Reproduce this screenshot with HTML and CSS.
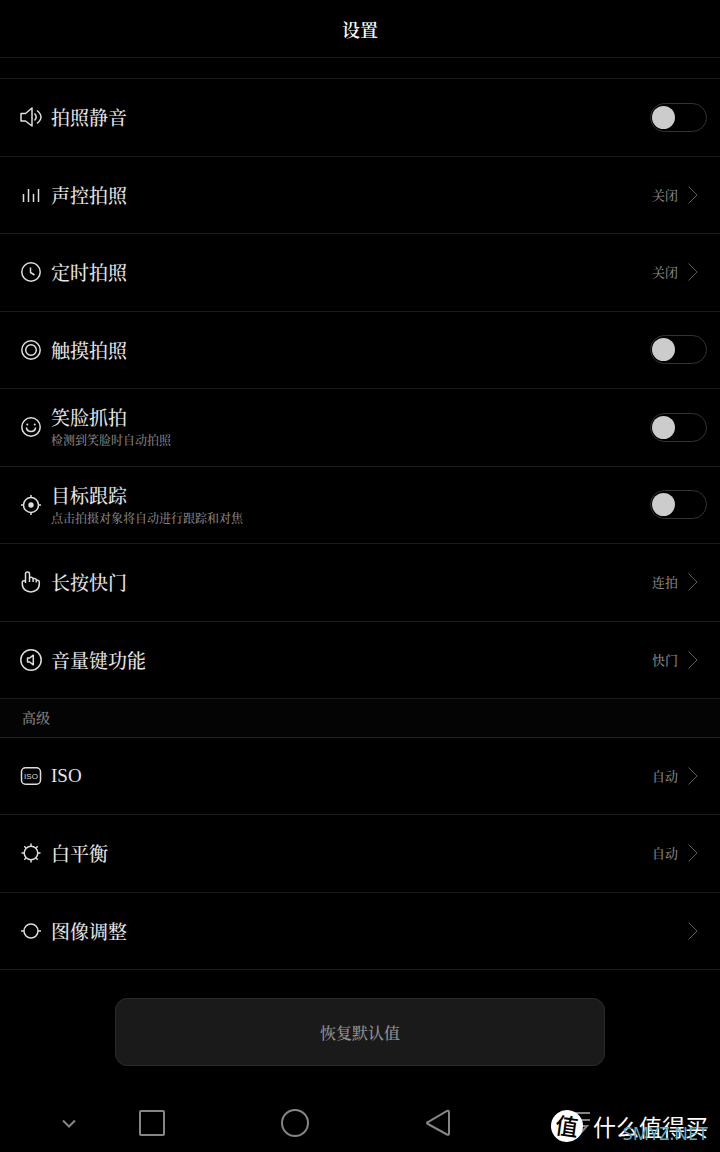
FILE: index.html
```html
<!DOCTYPE html>
<html lang="zh-CN">
<head>
<meta charset="utf-8">
<meta name="viewport" content="width=device-width, initial-scale=1">
<title>设置</title>
<link rel="stylesheet" href="styles.css">
</head>
<body>
<div class="screen">
  <header class="header"><h1 class="title">设置</h1></header>
  <div class="spacer"></div>
  <main class="content">
    <section class="list list-main">
      <label class="row">
        <svg class="icon" viewBox="0 0 22 22"><path d="M1 7.500h4.500L12 2v18l-6.500-5H1z"/><path d="M14.500 7.500q3.400 3.500 0 7M17 4.500q8 6.500 0 13"/></svg>
        <span class="text"><span class="name">拍照静音</span></span>
        <input class="toggle" type="checkbox">
      </label>
      <button class="row" type="button">
        <svg class="icon" viewBox="0 0 22 22"><path d="M3.500 10v8M8.500 5v13M13.500 10v8M18.500 5v13"/></svg>
        <span class="text"><span class="name">声控拍照</span></span>
        <span class="value">关闭</span>
        <svg class="arrow" viewBox="0 0 10 18"><path d="M.5.5 9 9 .5 17.500"/></svg>
      </button>
      <button class="row" type="button">
        <svg class="icon" viewBox="0 0 22 22"><circle cx="11" cy="11" r="9.200"/><path d="M10.500 6.500v5l4 2.500"/></svg>
        <span class="text"><span class="name">定时拍照</span></span>
        <span class="value">关闭</span>
        <svg class="arrow" viewBox="0 0 10 18"><path d="M.5.5 9 9 .5 17.500"/></svg>
      </button>
      <label class="row">
        <svg class="icon" viewBox="0 0 22 22"><circle cx="11" cy="11" r="9.200"/><circle cx="11" cy="11" r="5.300"/></svg>
        <span class="text"><span class="name">触摸拍照</span></span>
        <input class="toggle" type="checkbox">
      </label>
      <label class="row">
        <svg class="icon" viewBox="0 0 22 22"><circle cx="11" cy="11" r="9.200"/><path d="M6.300 11.500c1 5.300 8.400 5.300 9.400 0"/><circle class="fill" cx="7.300" cy="8.500" r="1"/><circle class="fill" cx="14.700" cy="8.500" r="1"/></svg>
        <span class="text"><span class="name">笑脸抓拍</span><span class="hint">检测到笑脸时自动拍照</span></span>
        <input class="toggle" type="checkbox">
      </label>
      <label class="row">
        <svg class="icon" viewBox="0 0 22 22"><circle cx="11" cy="11" r="7.500"/><circle class="fill" cx="11" cy="11" r="2.700"/><path d="M11 1v3M11 18v3M1 11h3M18 11h3"/></svg>
        <span class="text"><span class="name">目标跟踪</span><span class="hint">点击拍摄对象将自动进行跟踪和对焦</span></span>
        <input class="toggle" type="checkbox">
      </label>
      <button class="row" type="button">
        <svg class="icon" viewBox="0 0 22 22"><path d="M5.500 12V3c0-2.600 4-2.600 4 0v8M9.500 7.500c0-1.800 3.600-1.800 3.600.5v3M13.100 8.500c0-1.500 3.200-1.500 3.200.5v2.500M16.300 10.500c0-1.700 3-1.500 3 .5v2c0 10.500-17 10.500-17 0v-2c0-1.700 3.200-1.900 3.200 0"/></svg>
        <span class="text"><span class="name">长按快门</span></span>
        <span class="value">连拍</span>
        <svg class="arrow" viewBox="0 0 10 18"><path d="M.5.5 9 9 .5 17.500"/></svg>
      </button>
      <button class="row" type="button">
        <svg class="icon" viewBox="0 0 22 22"><circle cx="11" cy="11" r="10.200"/><path d="M7.500 9h2.200l3.600-2.800v9.600L9.700 13H7.500z"/></svg>
        <span class="text"><span class="name">音量键功能</span></span>
        <span class="value">快门</span>
        <svg class="arrow" viewBox="0 0 10 18"><path d="M.5.5 9 9 .5 17.500"/></svg>
      </button>
    </section>
    <h2 class="group">高级</h2>
    <section class="list list-advanced">
      <button class="row" type="button">
        <svg class="icon" viewBox="0 0 22 22"><rect x="1.500" y="2.800" width="19" height="16.400" rx="4"/><text class="icon-text" x="11" y="14" text-anchor="middle">ISO</text></svg>
        <span class="text"><span class="name latin">ISO</span></span>
        <span class="value">自动</span>
        <svg class="arrow" viewBox="0 0 10 18"><path d="M.5.5 9 9 .5 17.500"/></svg>
      </button>
      <button class="row" type="button">
        <svg class="icon" viewBox="0 0 22 22"><circle cx="11" cy="11" r="6.800"/><path d="M11 1.500v2.700M11 17.800v2.700M1.500 11h2.700M17.800 11h2.700M4.300 4.300l1.900 1.900M15.800 15.800l1.900 1.900M4.300 17.700l1.900-1.900M15.800 6.200l1.900-1.900"/></svg>
        <span class="text"><span class="name">白平衡</span></span>
        <span class="value">自动</span>
        <svg class="arrow" viewBox="0 0 10 18"><path d="M.5.5 9 9 .5 17.500"/></svg>
      </button>
      <button class="row" type="button">
        <svg class="icon" viewBox="0 0 22 22"><circle cx="11" cy="11" r="7"/><path d="M1 11h3M18 11h3"/></svg>
        <span class="text"><span class="name">图像调整</span></span>
        <svg class="arrow" viewBox="0 0 10 18"><path d="M.5.5 9 9 .5 17.500"/></svg>
      </button>
    </section>
    <div class="actions"><button class="reset" type="button">恢复默认值</button></div>
  </main>
  <nav class="navbar">
    <button class="nav-key" type="button" aria-label="收起"><svg class="nav-icon" viewBox="0 0 30 30"><path d="m9 12.500 6 6 6-6"/></svg></button>
    <button class="nav-key" type="button" aria-label="最近任务"><svg class="nav-icon" viewBox="0 0 30 30"><rect x="3" y="3" width="24" height="24" rx="1"/></svg></button>
    <button class="nav-key" type="button" aria-label="主屏幕"><svg class="nav-icon" viewBox="0 0 30 30"><circle cx="15" cy="15" r="13"/></svg></button>
    <button class="nav-key" type="button" aria-label="返回"><svg class="nav-icon" viewBox="0 0 30 30"><path d="M26 4.500v21q0 2-2 1L5 16q-2-1 0-2l19-11q2-1 2 1.500z"/></svg></button>
    <button class="nav-key" type="button" aria-label="通知"><svg class="nav-icon" viewBox="0 0 30 30"><path d="M2 5h22M2 12h22M12 18h9l-8 9"/></svg></button>
    <div class="watermark">
      <span class="badge">值</span>
      <span class="brand">什么值得买</span>
      <span class="site">SMYZ.NET</span>
    </div>
  </nav>
</div>
</body>
</html>
```
FILE: styles.css
```css
* {
  box-sizing: border-box;
}

body {
  margin: 0;
  background: #000;
  color: #e6e6e6;
  font-family: "Noto Serif CJK SC", "Noto Sans CJK SC", serif;
}

button {
  font-family: inherit;
  color: inherit;
}

.screen {
  display: flex;
  flex-direction: column;
  min-height: 100vh;
}

.header {
  display: flex;
  align-items: center;
  justify-content: center;
  height: 58px;
  border-bottom: 1px solid #1a1a1a;
}

.title {
  margin: 0;
  color: #fff;
  font-size: 18px;
  line-height: 24px;
  font-weight: 600;
}

.spacer {
  height: 21px;
  border-bottom: 1px solid #1a1a1a;
}

.content {
  flex: 1;
}

.list {
  display: grid;
  grid-auto-rows: 1fr;
}

.list-main {
  min-height: 620px;
}

.list-advanced {
  min-height: 232px;
}

.row {
  display: flex;
  align-items: center;
  width: 100%;
  padding: 0 13px 0 20px;
  border: 0;
  border-bottom: 1px solid #1c1c1c;
  background: none;
  text-align: left;
}

.icon {
  flex: none;
  width: 22px;
  height: 22px;
  margin-right: 9px;
  fill: none;
  stroke: #dedede;
  stroke-width: 1.5;
  stroke-linejoin: round;
}

.icon .fill {
  fill: #dedede;
  stroke: none;
}

.icon-text {
  fill: #dedede;
  stroke: none;
  font-family: "Liberation Sans", sans-serif;
  font-size: 8px;
}

.text {
  display: flex;
  flex: 1;
  flex-direction: column;
}

.name {
  font-size: 19px;
  line-height: 26px;
  font-weight: 500;
}

.latin {
  font-family: "Liberation Serif", serif;
  font-size: 19px;
}

.hint {
  color: #858585;
  font-size: 12px;
  line-height: 20px;
  font-weight: 500;
}

.value {
  margin-right: 10px;
  color: #858585;
  font-size: 13px;
  line-height: 20px;
  font-weight: 500;
}

.arrow {
  flex: none;
  width: 10px;
  height: 18px;
  margin-right: 9px;
  fill: none;
  stroke: #5c5c5c;
}

.toggle {
  flex: none;
  width: 57px;
  height: 29px;
  margin: 0;
  padding: 2px 1px;
  appearance: none;
  border: 1px solid #333;
  border-radius: 15px;
}

.toggle::before {
  content: "";
  display: block;
  width: 23px;
  height: 23px;
  border-radius: 50%;
  background: #ccc;
}

.toggle:checked::before {
  margin-left: auto;
}

.group {
  margin: 0;
  padding: 8px 22px 10px;
  border-bottom: 1px solid #222;
  background: #040404;
  color: #858585;
  font-size: 14px;
  line-height: 20px;
  font-weight: 500;
}

.actions {
  display: flex;
  justify-content: center;
  padding: 28px 0;
}

.reset {
  width: 68%;
  height: 68px;
  border: 1px solid #2b2b2b;
  border-radius: 12px;
  background: #1a1a1a;
  color: #929292;
  font-size: 16px;
  font-weight: 500;
}

.navbar {
  position: relative;
  display: grid;
  grid-template-columns: 24px repeat(4, 1fr);
  align-items: center;
  height: 58px;
  margin-bottom: 1px;
  padding: 0 68px 0 57px;
}

.nav-key {
  display: flex;
  justify-content: center;
  padding: 0;
  border: 0;
  background: none;
}

.nav-icon {
  flex: none;
  width: 30px;
  height: 30px;
  fill: none;
  stroke: #858585;
  stroke-width: 2;
}

.watermark {
  position: absolute;
  right: 12px;
  bottom: 10px;
  display: flex;
  align-items: center;
  gap: 10px;
  color: #fff;
  font-family: "Noto Sans CJK SC", sans-serif;
}

.badge {
  width: 32px;
  height: 32px;
  border-radius: 50%;
  background: #fff;
  color: #000;
  font-size: 23px;
  line-height: 30px;
  font-weight: 500;
  text-align: center;
  transform: rotate(8deg);
}

.brand {
  font-size: 23px;
  line-height: 28px;
}

.site {
  position: absolute;
  right: 0;
  bottom: -3px;
  color: #5eacc2;
  font-family: "Noto Sans", sans-serif;
  font-size: 18px;
  line-height: 24px;
}
```
